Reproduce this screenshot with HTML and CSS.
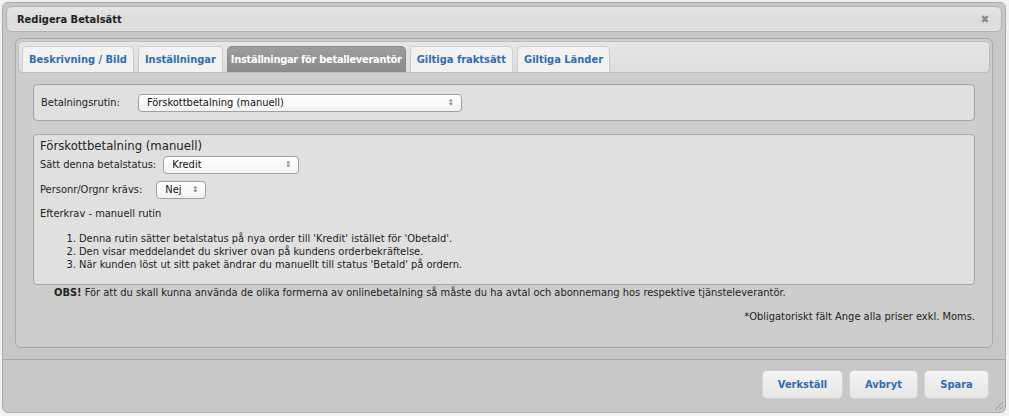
FILE: index.html
```html
<!DOCTYPE html>
<html lang="sv">
<head>
    <meta charset="UTF-8">
    <title>Redigera Betalsätt</title>
    <link rel="stylesheet" href="styles.css">
</head>
<body>
    <div class="dialog">
        <div class="titlebar">
            <span class="title">Redigera Betalsätt</span>
            <span class="close">&#10006;</span>
        </div>

        <div class="content">
            <div class="tabs">
                <ul class="tabnav">
                    <li class="tab">Beskrivning / Bild</li>
                    <li class="tab">Inställningar</li>
                    <li class="tab active">Inställningar för betalleverantör</li>
                    <li class="tab">Giltiga fraktsätt</li>
                    <li class="tab">Giltiga Länder</li>
                </ul>

                <div class="panel">
                    <div class="box box-routine">
                        <label>Betalningsrutin:</label>
                        <div class="select select-wide">Förskottbetalning (manuell)<span class="arrows">&#8661;</span></div>
                    </div>

                    <div class="box box-settings">
                        <h3>Förskottbetalning (manuell)</h3>
                        <div class="row">
                            <label>Sätt denna betalstatus:</label>
                            <div class="select select-status">Kredit<span class="arrows">&#8661;</span></div>
                        </div>
                        <div class="row">
                            <label>Personr/Orgnr krävs:</label>
                            <div class="select select-small">Nej<span class="arrows">&#8661;</span></div>
                        </div>
                        <p class="subtitle">Efterkrav - manuell rutin</p>
                        <ol>
                            <li>Denna rutin sätter betalstatus på nya order till 'Kredit' istället för 'Obetald'.</li>
                            <li>Den visar meddelandet du skriver ovan på kundens orderbekräftelse.</li>
                            <li>När kunden löst ut sitt paket ändrar du manuellt till status 'Betald' på ordern.</li>
                        </ol>
                    </div>

                    <p class="note"><b>OBS!</b> För att du skall kunna använda de olika formerna av onlinebetalning så måste du ha avtal och abonnemang hos respektive tjänsteleverantör.</p>
                    <p class="required">*Obligatoriskt fält Ange alla priser exkl. Moms.</p>
                </div>
            </div>
        </div>

        <div class="buttonpane">
            <button class="btn-apply">Verkställ</button>
            <button class="btn-cancel">Avbryt</button>
            <button class="btn-save">Spara</button>
        </div>
        <span class="grip"></span>
    </div>
</body>
</html>
```

FILE: styles.css
```css
body {
    margin: 0;
    padding: 2px;
    background-color: #f2f2f2;
    font-family: "DejaVu Sans Condensed", "DejaVu Sans", sans-serif;
    font-size: 11px;
    color: #222;
}

.dialog {
    position: relative;
    width: 996px;
    height: 403px;
    padding: 3px;
    background-color: #c8c8c8;
    border: 1px solid #a9a9a9;
    border-radius: 6px;
    display: flex;
    flex-direction: column;
}

.titlebar {
    height: 24px;
    border: 1px solid #b2b2b2;
    border-radius: 6px;
    background: linear-gradient(#e6e6e6, #dcdcdc 50%, #e2e2e2);
    display: flex;
    align-items: center;
    justify-content: space-between;
    padding: 0 12px 0 10px;
}

.title {
    font-weight: bold;
    color: #222;
}

.close {
    color: #8a8a8a;
    font-size: 11px;
}

.content {
    padding: 6px 9px 0 9px;
}

.tabs {
    border: 1px solid #a9a9a9;
    border-radius: 6px;
    background-color: #cdcdcd;
    padding: 2px;
    height: 304px;
}

.tabnav {
    list-style: none;
    margin: 0;
    padding: 4px 3px 0;
    height: 26px;
    background: linear-gradient(#e6e6e6, #dedede);
    border: 1px solid #bdbdbd;
    border-radius: 5px;
    display: flex;
    gap: 4px;
}

.tab {
    height: 25px;
    line-height: 25px;
    padding: 0 6px;
    border: 1px solid #cfcfcf;
    border-bottom: none;
    border-radius: 5px 5px 0 0;
    background-color: #f2f2f2;
    color: #2f6db0;
    font-weight: bold;
}

.tab.active {
    padding: 0 3px;
    letter-spacing: -0.3px;
    background: linear-gradient(#9e9e9e, #8a8a8a);
    border-color: #8a8a8a;
    color: #fff;
}

.panel {
    padding: 11px 15px 0;
}

.box {
    background-color: #e0e0e0;
    border: 1px solid #a5a5a5;
    border-radius: 4px;
}

.box-routine {
    height: 35px;
    display: flex;
    align-items: center;
    padding: 0 7px;
    gap: 18px;
}

.box-settings {
    margin-top: 13px;
    height: 149px;
    padding: 0 6px;
}

.box-settings h3 {
    margin: 3px 0 2px;
    font-size: 13px;
    font-weight: normal;
    color: #222;
}

.row {
    display: flex;
    align-items: center;
    gap: 7px;
    height: 19px;
    margin-bottom: 6px;
}

.select {
    position: relative;
    height: 16px;
    line-height: 16px;
    padding: 0 8px;
    background: linear-gradient(#ffffff, #f2f2f2);
    border: 1px solid #a0a0a0;
    border-radius: 4px;
    color: #111;
}

.arrows {
    position: absolute;
    right: 7px;
    top: 0;
    font-size: 8px;
    color: #555;
}

.select-wide {
    width: 306px;
}

.select-status {
    width: 118px;
}

.select-small {
    width: 32px;
    margin-left: 7px;
}

.subtitle {
    margin: 8px 0 12px;
}

ol {
    margin: 0;
    padding-left: 39px;
    line-height: 13px;
}

.note {
    margin: 1px 0 0 21px;
}

.required {
    margin: 11px 0 0;
    text-align: right;
}

.buttonpane {
    margin: 11px -3px 0;
    border-top: 1px solid #a9a9a9;
    display: flex;
    justify-content: flex-end;
    gap: 6px;
    padding: 10px 16px 0;
}

button {
    height: 29px;
    padding: 0;
    background: linear-gradient(#f4f4f4, #e6e6e6);
    border: 1px solid #d2d2d2;
    border-radius: 5px;
    font-family: "DejaVu Sans Condensed", "DejaVu Sans", sans-serif;
    font-size: 11px;
    font-weight: bold;
    color: #2f6db0;
}

.btn-apply {
    width: 81px;
}

.btn-cancel {
    width: 69px;
}

.btn-save {
    width: 65px;
}

.grip {
    position: absolute;
    right: 2px;
    bottom: 2px;
    width: 8px;
    height: 8px;
    background: linear-gradient(135deg, transparent 45%, #999 45%, #999 55%, transparent 55%, transparent 70%, #999 70%, #999 80%, transparent 80%);
}
```
